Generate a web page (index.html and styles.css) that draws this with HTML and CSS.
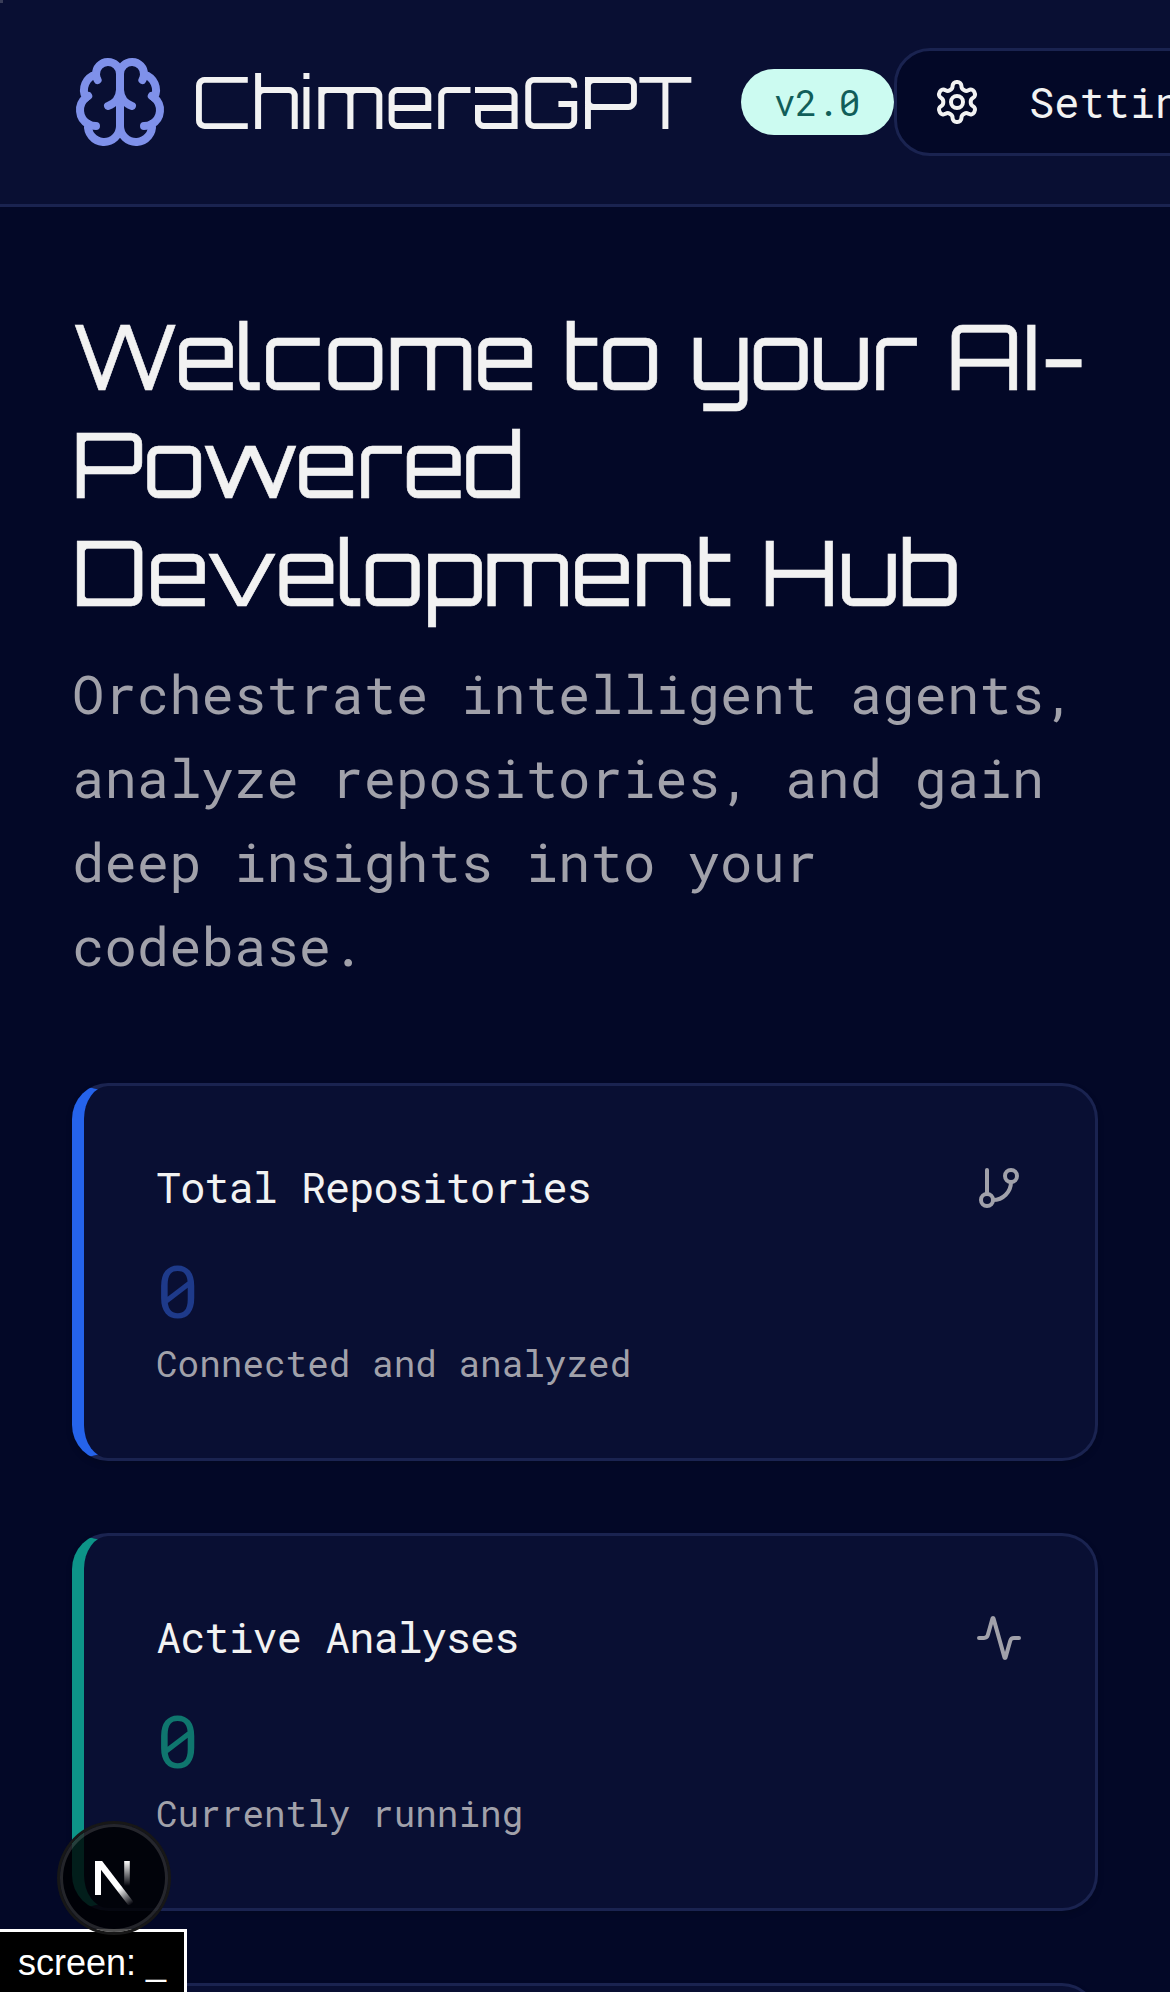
FILE: index.html
```html
<!DOCTYPE html>
<html lang="en">
<head>
<meta charset="utf-8">
<title>ChimeraGPT</title>
<link rel="stylesheet" href="styles.css">
</head>
<body>
<header class="header">
  <svg class="brain" viewBox="0 0 24 24"><path d="M12 5a3 3 0 1 0-5.997.125 4 4 0 0 0-2.526 5.77 4 4 0 0 0 .556 6.588A4 4 0 1 0 12 18Z"/><path d="M12 5a3 3 0 1 1 5.997.125 4 4 0 0 1 2.526 5.77 4 4 0 0 1-.556 6.588A4 4 0 1 1 12 18Z"/><path d="M15 13a4.5 4.5 0 0 1-3-4 4.5 4.5 0 0 1-3 4"/><path d="M17.599 6.5a3 3 0 0 0 .399-1.375"/><path d="M6.003 5.125A3 3 0 0 0 6.401 6.5"/><path d="M3.477 10.896a4 4 0 0 1 .585-.396"/><path d="M19.938 10.5a4 4 0 0 1 .585.396"/><path d="M6 18a4 4 0 0 1-1.967-.516"/><path d="M19.967 17.484A4 4 0 0 1 18 18"/></svg>
  <div class="brand">ChimeraGPT</div>
  <span class="version">v2.0</span>
  <button class="settings">
    <svg class="icon" viewBox="0 0 24 24"><path d="M12.22 2h-.44a2 2 0 0 0-2 2v.18a2 2 0 0 1-1 1.73l-.43.25a2 2 0 0 1-2 0l-.15-.08a2 2 0 0 0-2.73.73l-.22.38a2 2 0 0 0 .73 2.73l.15.1a2 2 0 0 1 1 1.72v.51a2 2 0 0 1-1 1.74l-.15.09a2 2 0 0 0-.73 2.73l.22.38a2 2 0 0 0 2.73.73l.15-.08a2 2 0 0 1 2 0l.43.25a2 2 0 0 1 1 1.73V20a2 2 0 0 0 2 2h.44a2 2 0 0 0 2-2v-.18a2 2 0 0 1 1-1.73l.43-.25a2 2 0 0 1 2 0l.15.08a2 2 0 0 0 2.73-.73l.22-.39a2 2 0 0 0-.73-2.73l-.15-.08a2 2 0 0 1-1-1.74v-.5a2 2 0 0 1 1-1.74l.15-.09a2 2 0 0 0 .73-2.73l-.22-.38a2 2 0 0 0-2.73-.73l-.15.08a2 2 0 0 1-2 0l-.43-.25a2 2 0 0 1-1-1.73V4a2 2 0 0 0-2-2z"/><circle cx="12" cy="12" r="3"/></svg>
    <span>Settings</span>
  </button>
</header>
<main class="main">
  <h1 class="title"><span class="first">Welcome</span> <span>to</span> <span>your</span> <span>AI-</span><span>Powered</span> <span>Development</span> <span>Hub</span></h1>
  <p class="lead">Orchestrate intelligent agents, analyze repositories, and gain deep insights into your codebase.</p>
  <section class="cards">
    <article class="card card-blue">
      <div class="card-head"><h2>Total Repositories</h2>
        <svg class="icon" viewBox="0 0 24 24"><path d="M6 3v12"/><circle cx="18" cy="6" r="3"/><circle cx="6" cy="18" r="3"/><path d="M18 9a9 9 0 0 1-9 9"/></svg></div>
      <div class="value">0</div>
      <p class="note">Connected and analyzed</p>
    </article>
    <article class="card card-teal">
      <div class="card-head"><h2>Active Analyses</h2>
        <svg class="icon" viewBox="0 0 24 24"><path d="M22 12h-2.48a2 2 0 0 0-1.93 1.46l-2.35 8.36a.25.25 0 0 1-.48 0L9.24 2.18a.25.25 0 0 0-.48 0l-2.35 8.36A2 2 0 0 1 4.49 12H2"/></svg></div>
      <div class="value">0</div>
      <p class="note">Currently running</p>
    </article>
    <article class="card"></article>
  </section>
</main>
<div class="corner"></div>
<div class="screen">screen: _</div>
<div class="dev">
  <svg viewBox="0 0 108 108">
    <defs>
      <linearGradient id="diag" gradientUnits="userSpaceOnUse" x1="60" y1="64" x2="72" y2="80"><stop offset="0" stop-color="#fff"/><stop offset="1" stop-color="#fff" stop-opacity="0"/></linearGradient>
      <linearGradient id="stem" gradientUnits="userSpaceOnUse" x1="67" y1="37" x2="67" y2="62"><stop offset="0" stop-color="#fff"/><stop offset="1" stop-color="#fff" stop-opacity="0"/></linearGradient>
      <clipPath id="mark"><rect x="35" y="37" width="38" height="44"/></clipPath>
    </defs>
    <path clip-path="url(#mark)" d="M38 71V37" fill="none" stroke="#fff" stroke-width="6"/>
    <path clip-path="url(#mark)" d="M35.5 33.5L72 81" fill="none" stroke="url(#diag)" stroke-width="6.2"/>
    <path d="M67 37v25" fill="none" stroke="url(#stem)" stroke-width="5.6"/>
  </svg>
</div>
</body>
</html>
```
FILE: styles.css
```css
* { box-sizing: border-box; margin: 0; padding: 0; }
html { background: #030827; }
body {
  width: 1170px;
  height: 1992px;
  overflow: hidden;
  background: #030827;
  color: #f2f2f2;
  font-family: "Roboto Mono", "DejaVu Sans Mono", monospace;
}
svg { flex: none; display: block; }
.header {
  display: flex;
  align-items: center;
  height: 207px;
  padding: 0 72px;
  background: #090f33;
  border-bottom: 3px solid #1a2350;
}
.brain, .icon {
  fill: none;
  stroke: currentColor;
  stroke-width: 2;
  stroke-linecap: round;
  stroke-linejoin: round;
}
.brain { width: 96px; height: 96px; color: #7f91ea; }
.icon { width: 48px; height: 48px; }
.brand {
  flex: none;
  width: 573px;
  padding: 0 0 3px 24px;
  font: 72px/96px Orbitron, "DejaVu Sans", sans-serif;
  white-space: nowrap;
}
.version {
  flex: none;
  width: 153px;
  height: 66px;
  padding-left: 33px;
  border-radius: 33px;
  background: #ccfbf1;
  color: #115e59;
  font-size: 36px;
  line-height: 67px;
}
.settings {
  flex: none;
  display: flex;
  align-items: center;
  gap: 48px;
  height: 108px;
  padding: 0 36px;
  border: 3px solid #1a2350;
  border-radius: 36px;
  background: #030827;
  color: inherit;
  font: 42px/60px "Roboto Mono", "DejaVu Sans Mono", monospace;
}
.settings span { padding-bottom: 1px; }
.main { padding: 95px 72px 0; }
.title {
  font: 440 90px/108px Orbitron, "DejaVu Sans", sans-serif;
  letter-spacing: -0.25px;
  word-spacing: 5px;
  -webkit-text-stroke: 0.6px currentColor;
}
.title span { display: inline-block; }
.title .first { margin-right: -3px; }
.lead {
  margin-top: 25px;
  font-size: 54px;
  line-height: 84px;
}
.lead, .note, .card .icon { color: #a1a1aa; }
.cards { display: flex; flex-direction: column; gap: 72px; margin-top: 96px; }
.card {
  flex: none;
  height: 378px;
  padding: 69px 72px;
  border: 3px solid #1a2350;
  border-left-width: 12px;
  border-radius: 36px;
  background: #090f33;
  box-shadow: 0 3px 6px rgba(0, 0, 0, 0.15);
}
.card-blue { border-left-color: #2563eb; }
.card-teal { border-left-color: #0d9488; }
.card-head { display: flex; justify-content: space-between; align-items: center; height: 66px; margin-bottom: 22px; }
.card h2 { padding-bottom: 4px; font-size: 42px; font-weight: 400; letter-spacing: -0.025em; }
.value { height: 96px; font-size: 72px; line-height: 96px; }
.card-blue .value { color: #1e3a8a; }
.card-teal .value { color: #0f766e; }
.note { font-size: 36px; line-height: 48px; }
.corner {
  position: fixed;
  left: 0;
  top: 0;
  width: 3px;
  height: 3px;
  background: #393d58;
}
.screen {
  position: fixed;
  left: 0;
  bottom: 0;
  width: 187px;
  height: 63px;
  padding-left: 18px;
  border-top: 3px solid #fff;
  border-right: 3px solid #fff;
  background: #000;
  color: #fff;
  font: 36px/62px "Liberation Sans", sans-serif;
  white-space: nowrap;
}
.dev {
  position: fixed;
  left: 60px;
  top: 1824px;
  width: 108px;
  height: 108px;
  border-radius: 50%;
  background: rgba(0, 0, 0, 0.8);
  box-shadow: 0 0 0 3px #171717, inset 0 0 0 3px rgba(255, 255, 255, 0.14);
}
```
